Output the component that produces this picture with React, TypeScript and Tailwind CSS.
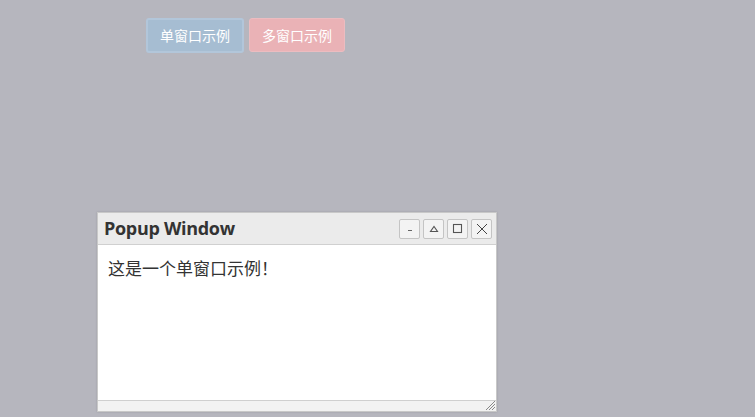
import React from 'react';

const ToolButton: React.FC<{ children: React.ReactNode }> = ({ children }) => (
  <button className="w-[21px] h-[20px] flex items-center justify-center bg-[#f3f3f3] border border-[#c4c4c4] rounded-[2px] text-[#555]">
    {children}
  </button>
);

const App: React.FC = () => {
  return (
    <div
      className="w-[755px] h-[417px] bg-[#b6b6be] overflow-hidden flex flex-col"
      style={{ fontFamily: '"Noto Sans CJK SC", sans-serif' }}
    >
      {/* 顶部按钮 */}
      <div className="flex gap-[5px] pl-[146px] pt-[18px]">
        <button className="w-[98px] h-[35px] bg-[#a6bdd2] border-2 border-[#b2c6da] rounded-[3px] text-white text-[14px]">
          单窗口示例
        </button>
        <button className="w-[96px] h-[34px] bg-[#eab2b6] border border-[#ecbcc0] rounded-[3px] text-white text-[14px]">
          多窗口示例
        </button>
      </div>

      {/* 弹出窗口 */}
      <div className="ml-[97px] mt-[159px] w-[400px] h-[200px] flex flex-col bg-white border border-[#c8c8c8] shadow-[0_0_2px_rgba(0,0,0,0.15)]">
        <div className="h-[32px] flex items-center justify-between bg-[#ebebeb] border-b border-[#d0d0d0] pl-[6px] pr-[4px]">
          <span className="text-[18px] font-bold text-[#333] tracking-[-0.3px]" style={{ fontFamily: '"Open Sans", sans-serif' }}>
            Popup Window
          </span>
          <div className="flex gap-[3px]">
            <ToolButton>
              <svg width="8" height="8" viewBox="0 0 8 8"><path d="M2 5.5h4" stroke="#666" strokeWidth="1" /></svg>
            </ToolButton>
            <ToolButton>
              <svg width="10" height="10" viewBox="0 0 10 10"><path d="M1.5 7.5h7L5 2.5z" fill="none" stroke="#555" strokeWidth="1.1" /></svg>
            </ToolButton>
            <ToolButton>
              <svg width="11" height="11" viewBox="0 0 11 11"><rect x="1.5" y="1.5" width="8" height="8" fill="none" stroke="#555" strokeWidth="1.1" /></svg>
            </ToolButton>
            <ToolButton>
              <svg width="12" height="12" viewBox="0 0 12 12"><path d="M1 1l10 10M11 1L1 11" stroke="#444" strokeWidth="1" /></svg>
            </ToolButton>
          </div>
        </div>
        <div className="flex-1 px-[10px] pt-[10px] text-[17px] text-[#333]">这是一个单窗口示例！</div>
        <div className="h-[11px] bg-[#f2f2f2] border-t border-[#cfcfcf] flex justify-end items-end">
          <svg width="10" height="10" viewBox="0 0 10 10">
            <path d="M9 3L3 9M9 6L6 9M9 0L0 9" stroke="#888" strokeWidth="1" />
          </svg>
        </div>
      </div>
    </div>
  );
};

export default App;
